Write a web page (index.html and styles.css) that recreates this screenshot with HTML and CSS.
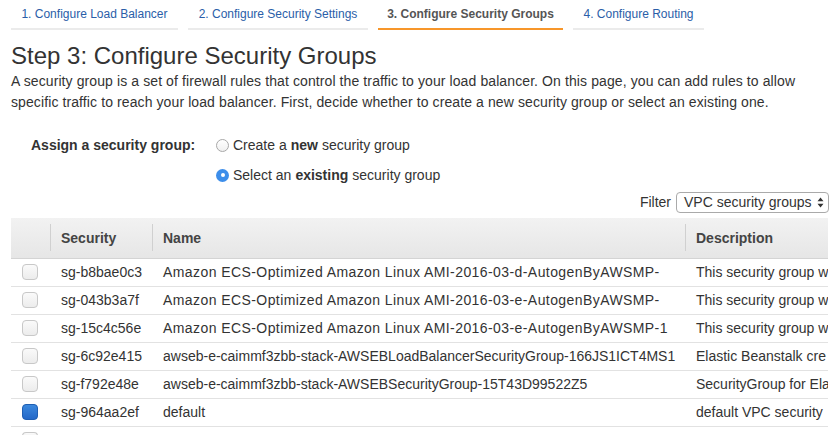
FILE: index.html
```html
<!DOCTYPE html>
<html>
<head>
<meta charset="utf-8">
<link rel="stylesheet" href="styles.css">
</head>
<body>
<nav class="tabs">
  <a class="tab t1">1. Configure Load Balancer</a>
  <a class="tab t2">2. Configure Security Settings</a>
  <a class="tab t3 active">3. Configure Security Groups</a>
  <a class="tab t4">4. Configure Routing</a>
</nav>
<h1 class="title">Step 3: Configure Security Groups</h1>
<p class="intro">A security group is a set of firewall rules that control the traffic to your load balancer. On this page, you can add rules to allow specific traffic to reach your load balancer. First, decide whether to create a new security group or select an existing one.</p>
<div class="assign">
  <div class="assign-label">Assign a security group:</div>
  <div class="options">
    <label class="opt"><span class="radio"></span>Create a <b>new</b> security group</label>
    <label class="opt"><span class="radio on"></span>Select an <b>existing</b> security group</label>
  </div>
</div>
<div class="filter">
  <span>Filter</span>
  <div class="select">VPC security groups<svg width="7" height="11" viewBox="0 0 7 11"><path d="M3.5 0.5 L6.5 4.2 H0.5 Z M3.5 10.5 L6.5 6.8 H0.5 Z" fill="#333"/></svg></div>
</div>
<div class="grid-wrap">
  <table class="grid">
    <colgroup><col class="c0"><col class="c1"><col class="c2"><col class="c3"></colgroup>
    <thead>
      <tr><th></th><th><span class="sep"></span>Security</th><th><span class="sep"></span>Name</th><th><span class="sep"></span>Description</th></tr>
    </thead>
    <tbody>
      <tr><td><span class="cb"></span></td><td>sg-b8bae0c3</td><td class="wide">Amazon ECS-Optimized Amazon Linux AMI-2016-03-d-AutogenByAWSMP-</td><td>This security group w</td></tr>
      <tr><td><span class="cb"></span></td><td>sg-043b3a7f</td><td class="wide">Amazon ECS-Optimized Amazon Linux AMI-2016-03-e-AutogenByAWSMP-</td><td>This security group w</td></tr>
      <tr><td><span class="cb"></span></td><td>sg-15c4c56e</td><td class="wide">Amazon ECS-Optimized Amazon Linux AMI-2016-03-e-AutogenByAWSMP-1</td><td>This security group w</td></tr>
      <tr><td><span class="cb"></span></td><td>sg-6c92e415</td><td>awseb-e-caimmf3zbb-stack-AWSEBLoadBalancerSecurityGroup-166JS1ICT4MS1</td><td>Elastic Beanstalk cre</td></tr>
      <tr><td><span class="cb"></span></td><td>sg-f792e48e</td><td>awseb-e-caimmf3zbb-stack-AWSEBSecurityGroup-15T43D99522Z5</td><td>SecurityGroup for Ela</td></tr>
      <tr><td><span class="cb on"></span></td><td>sg-964aa2ef</td><td>default</td><td>default VPC security</td></tr>
      <tr class="last"><td><span class="cb"></span></td><td></td><td></td><td></td></tr>
    </tbody>
  </table>
</div>
</body>
</html>
```
FILE: styles.css
```css
html, body { margin: 0; padding: 0; background: #fff; }
body {
  font-family: "Liberation Sans", Arial, sans-serif;
  color: #333;
  padding: 0 0 0 11px;
  width: 829px;
  height: 435px;
  overflow: hidden;
  box-sizing: border-box;
}
.tabs { display: flex; gap: 10px; height: 30px; }
.tab {
  display: block;
  box-sizing: border-box;
  height: 30px;
  padding-top: 7px;
  font-size: 12px;
  color: #2a5ea8;
  text-align: center;
  border-bottom: 2px solid #ebebeb;
}
.t1 { width: 167px; }
.t2 { width: 180px; }
.t3 { width: 185px; }
.t4 { width: 131px; }
.tab.active { color: #555; font-weight: bold; border-bottom-color: #f7962a; }
.title {
  margin: 11px 0 0;
  font-size: 24px;
  font-weight: normal;
  color: #333;
  line-height: 30px;
}
.intro {
  margin: 0;
  font-size: 14px;
  line-height: 21px;
  letter-spacing: 0.1px;
  color: #333;
  width: 815px;
}
.assign { display: flex; margin-top: 22px; margin-left: 20px; }
.assign-label { width: 185px; font-weight: bold; font-size: 14px; line-height: 20px; }
.options { display: flex; flex-direction: column; gap: 10px; }
.opt { display: flex; align-items: center; font-size: 14px; line-height: 20px; }
.opt b { margin: 0 4px; }
.radio {
  width: 13px; height: 13px; box-sizing: border-box;
  border-radius: 50%;
  border: 1px solid #a8a8a8;
  background: linear-gradient(#fff, #f0f0f0);
  margin-right: 4px;
  position: relative;
}
.radio.on { border: none; background: #3d8eea; }
.radio.on::after {
  content: ""; position: absolute; left: 4.5px; top: 4.5px;
  width: 4px; height: 4px; border-radius: 50%; background: #fff;
}
.filter {
  display: flex; justify-content: flex-end; align-items: center; gap: 5px;
  margin-top: 6px; font-size: 14px; height: 22px;
}
.select {
  width: 153px; height: 21px; box-sizing: border-box;
  border: 1px solid #aaa; border-radius: 4px;
  display: flex; align-items: center; justify-content: space-between;
  padding: 0 4px 0 7px; font-size: 14px; background: #fff;
}
.grid-wrap { margin-top: 5px; width: 817px; overflow: hidden; }
.grid { border-collapse: collapse; table-layout: fixed; width: 817px; font-size: 14px; }
.c0 { width: 39px; } .c1 { width: 102px; } .c2 { width: 533px; } .c3 { width: 143px; }
.grid th {
  height: 40px; box-sizing: border-box;
  background: linear-gradient(#f2f2f2, #e6e6e6);
  border-bottom: 1px solid #d4d4d4;
  text-align: left; font-weight: bold; color: #444;
  padding: 1px 0 0 11px; position: relative;
}
.sep {
  position: absolute; left: 0; top: 6px; bottom: 7px;
  width: 1px; background: #d0d0d0;
}
.grid td {
  height: 28px; box-sizing: border-box;
  padding: 0 0 0 11px; border-bottom: 1px solid #e2e2e2;
  white-space: nowrap; overflow: hidden; color: #333;
}
.grid td.wide { letter-spacing: 0.42px; }
.grid tr.last td { vertical-align: top; padding-top: 5px; height: 8px; border-bottom: none; }
.grid tr.last .cb { height: 8px; border-bottom: none; border-radius: 4px 4px 0 0; }
.cb {
  display: block; width: 16px; height: 16px; box-sizing: border-box;
  border: 1px solid #c8c8c8; border-radius: 4px;
  background: linear-gradient(#fafafa, #ececec);
}
.cb.on { border: 1px solid #1f5fb3; background: linear-gradient(#3b88dd, #2468c8); }
```
